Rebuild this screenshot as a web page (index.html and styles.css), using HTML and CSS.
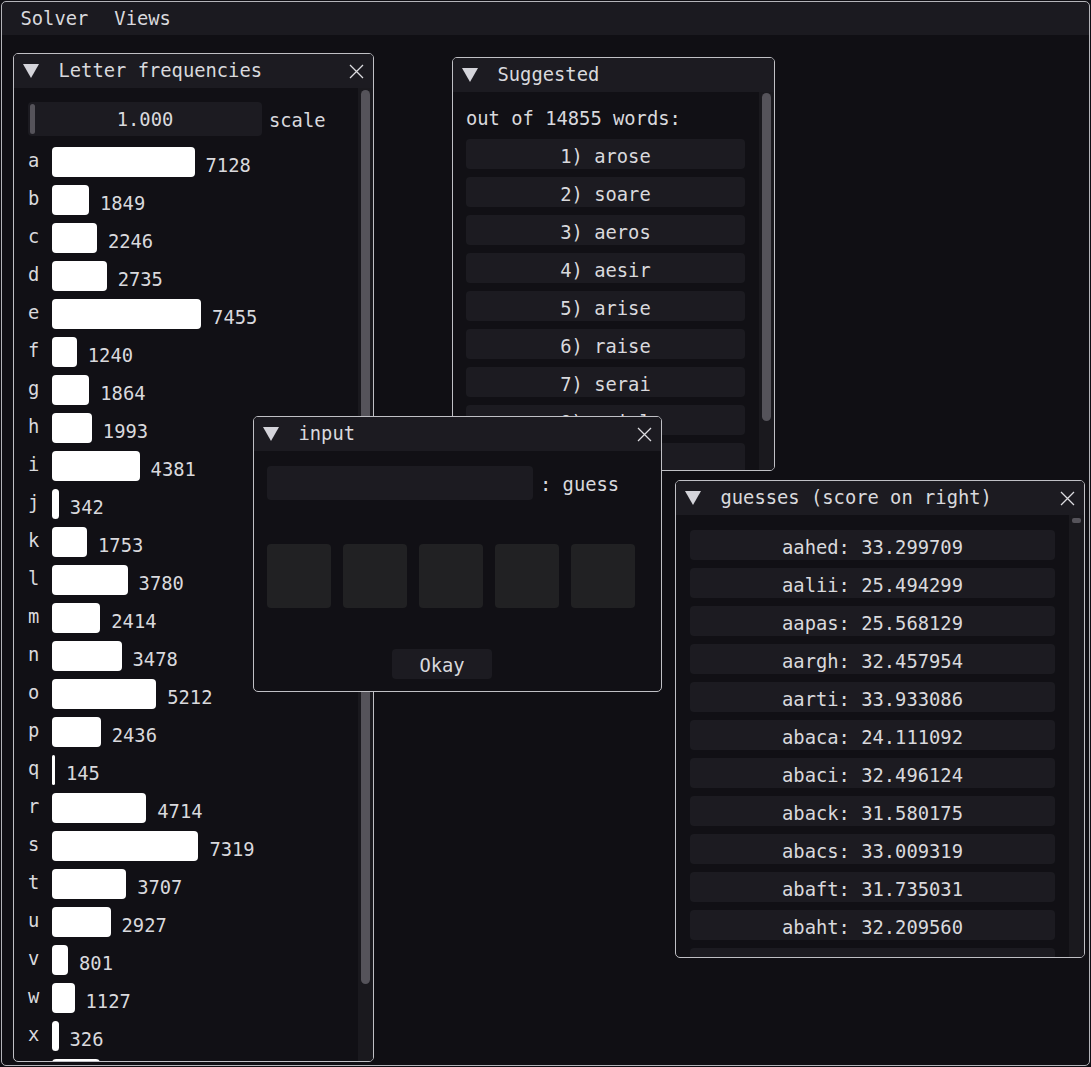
FILE: index.html
```html
<!DOCTYPE html>
<html>
<head>
<meta charset="utf-8">
<title>Solver</title>
<link rel="stylesheet" href="styles.css">
</head>
<body>
<div class="app">
  <nav class="menubar">
    <span class="menu">Solver</span>
    <span class="menu">Views</span>
  </nav>

  <section class="win win-freq">
    <header class="title">
      <span class="tri"></span>
      <span class="title-text">Letter frequencies</span>
      <svg class="close" width="15" height="15" viewBox="0 0 15 15"><path d="M1 1L14 14M14 1L1 14"/></svg>
    </header>
    <div class="content">
      <div class="body body-freq">
        <div class="slider-row">
          <div class="slider"><span class="slider-grab"></span><span class="slider-val">1.000</span></div>
          <span class="side-label">scale</span>
        </div>
        <div class="freq-list">
          <div class="frow"><span class="letter">a</span><span class="bar" style="width:142.56px"></span><span class="count">7128</span></div>
          <div class="frow"><span class="letter">b</span><span class="bar" style="width:36.98px"></span><span class="count">1849</span></div>
          <div class="frow"><span class="letter">c</span><span class="bar" style="width:44.92px"></span><span class="count">2246</span></div>
          <div class="frow"><span class="letter">d</span><span class="bar" style="width:54.7px"></span><span class="count">2735</span></div>
          <div class="frow"><span class="letter">e</span><span class="bar" style="width:149.1px"></span><span class="count">7455</span></div>
          <div class="frow"><span class="letter">f</span><span class="bar" style="width:24.8px"></span><span class="count">1240</span></div>
          <div class="frow"><span class="letter">g</span><span class="bar" style="width:37.28px"></span><span class="count">1864</span></div>
          <div class="frow"><span class="letter">h</span><span class="bar" style="width:39.86px"></span><span class="count">1993</span></div>
          <div class="frow"><span class="letter">i</span><span class="bar" style="width:87.62px"></span><span class="count">4381</span></div>
          <div class="frow"><span class="letter">j</span><span class="bar" style="width:6.84px"></span><span class="count">342</span></div>
          <div class="frow"><span class="letter">k</span><span class="bar" style="width:35.06px"></span><span class="count">1753</span></div>
          <div class="frow"><span class="letter">l</span><span class="bar" style="width:75.6px"></span><span class="count">3780</span></div>
          <div class="frow"><span class="letter">m</span><span class="bar" style="width:48.28px"></span><span class="count">2414</span></div>
          <div class="frow"><span class="letter">n</span><span class="bar" style="width:69.56px"></span><span class="count">3478</span></div>
          <div class="frow"><span class="letter">o</span><span class="bar" style="width:104.24px"></span><span class="count">5212</span></div>
          <div class="frow"><span class="letter">p</span><span class="bar" style="width:48.72px"></span><span class="count">2436</span></div>
          <div class="frow"><span class="letter">q</span><span class="bar" style="width:2.9px"></span><span class="count">145</span></div>
          <div class="frow"><span class="letter">r</span><span class="bar" style="width:94.28px"></span><span class="count">4714</span></div>
          <div class="frow"><span class="letter">s</span><span class="bar" style="width:146.38px"></span><span class="count">7319</span></div>
          <div class="frow"><span class="letter">t</span><span class="bar" style="width:74.14px"></span><span class="count">3707</span></div>
          <div class="frow"><span class="letter">u</span><span class="bar" style="width:58.54px"></span><span class="count">2927</span></div>
          <div class="frow"><span class="letter">v</span><span class="bar" style="width:16.02px"></span><span class="count">801</span></div>
          <div class="frow"><span class="letter">w</span><span class="bar" style="width:22.54px"></span><span class="count">1127</span></div>
          <div class="frow"><span class="letter">x</span><span class="bar" style="width:6.52px"></span><span class="count">326</span></div>
          <div class="frow"><span class="letter">y</span><span class="bar" style="width:48px"></span><span class="count">2400</span></div>
        </div>
      </div>
      <div class="scroll"><div class="scroll-grab grab-freq"></div></div>
    </div>
  </section>

  <section class="win win-sugg">
    <header class="title">
      <span class="tri"></span>
      <span class="title-text">Suggested</span>
    </header>
    <div class="content">
      <div class="body body-sugg">
        <div class="sugg-head">out of 14855 words:</div>
        <div class="item">1) arose</div>
        <div class="item">2) soare</div>
        <div class="item">3) aeros</div>
        <div class="item">4) aesir</div>
        <div class="item">5) arise</div>
        <div class="item">6) raise</div>
        <div class="item">7) serai</div>
        <div class="item">8) ariel</div>
        <div class="item">9) reais</div>
      </div>
      <div class="scroll"><div class="scroll-grab grab-sugg"></div></div>
    </div>
  </section>

  <section class="win win-guess">
    <header class="title">
      <span class="tri"></span>
      <span class="title-text">guesses (score on right)</span>
      <svg class="close" width="15" height="15" viewBox="0 0 15 15"><path d="M1 1L14 14M14 1L1 14"/></svg>
    </header>
    <div class="content">
      <div class="body body-guess">
        <div class="item">aahed: 33.299709</div>
        <div class="item">aalii: 25.494299</div>
        <div class="item">aapas: 25.568129</div>
        <div class="item">aargh: 32.457954</div>
        <div class="item">aarti: 33.933086</div>
        <div class="item">abaca: 24.111092</div>
        <div class="item">abaci: 32.496124</div>
        <div class="item">aback: 31.580175</div>
        <div class="item">abacs: 33.009319</div>
        <div class="item">abaft: 31.735031</div>
        <div class="item">abaht: 32.209560</div>
        <div class="item">abamp: 30.842311</div>
      </div>
      <div class="scroll"><div class="scroll-grab grab-guess"></div></div>
    </div>
  </section>

  <section class="win win-input">
    <header class="title">
      <span class="tri"></span>
      <span class="title-text">input</span>
      <svg class="close" width="15" height="15" viewBox="0 0 15 15"><path d="M1 1L14 14M14 1L1 14"/></svg>
    </header>
    <div class="content">
      <div class="body body-input">
        <div class="field-row">
          <div class="field"></div>
          <span class="side-label">: guess</span>
        </div>
        <div class="tiles">
          <div class="tile"></div>
          <div class="tile"></div>
          <div class="tile"></div>
          <div class="tile"></div>
          <div class="tile"></div>
        </div>
        <div class="btn">Okay</div>
      </div>
    </div>
  </section>
</div>
</body>
</html>
```

FILE: styles.css
```css
html, body {
  margin: 0;
  padding: 0;
}

body {
  background: #100f14;
  font-family: "DejaVu Sans Mono", "Liberation Mono", monospace;
  font-size: 18.8px;
  color: #d9d9dd;
}

.app {
  position: relative;
  width: 1091px;
  height: 1067px;
  overflow: hidden;
}

.app::before {
  content: "";
  position: absolute;
  left: 1px;
  top: 1px;
  right: 1px;
  bottom: 1px;
  border: 1px solid #b4b4b9;
  border-radius: 5px;
  pointer-events: none;
}

.menubar {
  margin: 2px 2px 0;
  height: 33px;
  line-height: 33px;
  background: #1b1a20;
  display: flex;
  padding-left: 18.5px;
  border-radius: 4px 4px 0 0;
}

.menu + .menu {
  margin-left: 26px;
}

/* windows */
.win {
  position: absolute;
  box-sizing: border-box;
  border: 1px solid #c0c0c5;
  border-radius: 5px;
  background: #111015;
  overflow: hidden;
  display: flex;
  flex-direction: column;
}

.win-freq { left: 13px; top: 53px; width: 361px; height: 1009px; }
.win-sugg { left: 452px; top: 57px; width: 323px; height: 414px; }
.win-guess { left: 675px; top: 480px; width: 410px; height: 478px; }
.win-input { left: 253px; top: 416px; width: 409px; height: 276px; z-index: 2; }

.title {
  flex: none;
  height: 34px;
  line-height: 34px;
  background: #1c1b21;
  display: flex;
  align-items: center;
  padding-left: 9px;
  white-space: pre;
}

.tri {
  flex: none;
  width: 0;
  height: 0;
  border-left: 8.5px solid transparent;
  border-right: 8.5px solid transparent;
  border-top: 14px solid #d4d4da;
  margin-right: 19.5px;
}

.title-text {
  flex: 1;
}

.close {
  flex: none;
  margin-right: 9px;
}

.close path {
  stroke: #dcdce0;
  stroke-width: 1.3;
  fill: none;
}

.content {
  flex: 1;
  min-height: 0;
  display: flex;
}

.body {
  flex: 1;
  min-width: 0;
  overflow: hidden;
  box-sizing: border-box;
}

.scroll {
  flex: none;
  width: 15px;
  box-sizing: border-box;
  padding: 0 3px;
  background: #1a191e;
}

.scroll-grab {
  background: #55535a;
  border-radius: 5px;
}

.grab-freq { margin-top: 2px; height: 894px; }
.grab-sugg { margin-top: 1px; height: 328px; }
.grab-guess { margin-top: 3px; height: 5px; border-radius: 2px; }

/* letter frequencies */
.body-freq {
  padding: 14px 0 0 14px;
}

.slider-row,
.field-row {
  display: flex;
  align-items: flex-start;
  white-space: pre;
}

.slider {
  position: relative;
  width: 234px;
  height: 34px;
  box-sizing: border-box;
  padding-top: 2px;
  line-height: 32px;
  background: #1c1b21;
  border-radius: 4px;
  text-align: center;
}

.slider-grab {
  position: absolute;
  left: 2px;
  top: 2px;
  bottom: 2px;
  width: 5px;
  border-radius: 3px;
  background: #55535a;
}

.side-label {
  margin-left: 7px;
  line-height: 34px;
  padding-top: 2px;
}

.freq-list {
  margin-top: 9px;
  display: flex;
  flex-direction: column;
  gap: 8px;
}

.frow {
  display: flex;
  align-items: flex-start;
  height: 30px;
}

.letter {
  width: 24px;
  flex: none;
  line-height: 22px;
  padding-top: 3px;
}

.bar {
  flex: none;
  height: 30px;
  background: #ffffff;
  border-radius: 4px;
}

.count {
  margin-left: 11px;
  line-height: 22px;
  padding-top: 8px;
}

/* suggested */
.body-sugg {
  padding: 16px 14px 0 13px;
}

.sugg-head {
  line-height: 22px;
  margin-bottom: 9px;
  white-space: pre;
}

.item {
  height: 30px;
  box-sizing: border-box;
  padding-top: 4.5px;
  line-height: 25.5px;
  background: #1c1b21;
  border-radius: 4px;
  text-align: center;
  white-space: pre;
  margin-bottom: 8px;
}

/* guesses */
.body-guess {
  padding: 15px 14px 0 14px;
}

/* input */
.body-input {
  padding: 15px 13px 0 13px;
}

.field {
  width: 266px;
  height: 34px;
  background: #1c1b21;
  border-radius: 4px;
}

.tiles {
  display: flex;
  gap: 12px;
  margin-top: 42px;
}

.tile {
  width: 64px;
  height: 64px;
  background: #212123;
  border-radius: 4px;
}

.btn {
  margin-top: 41px;
  margin-left: 125px;
  width: 100px;
  height: 30px;
  box-sizing: border-box;
  padding-top: 3px;
  line-height: 27px;
  text-align: center;
  background: #1c1b21;
  border-radius: 4px;
}
```
